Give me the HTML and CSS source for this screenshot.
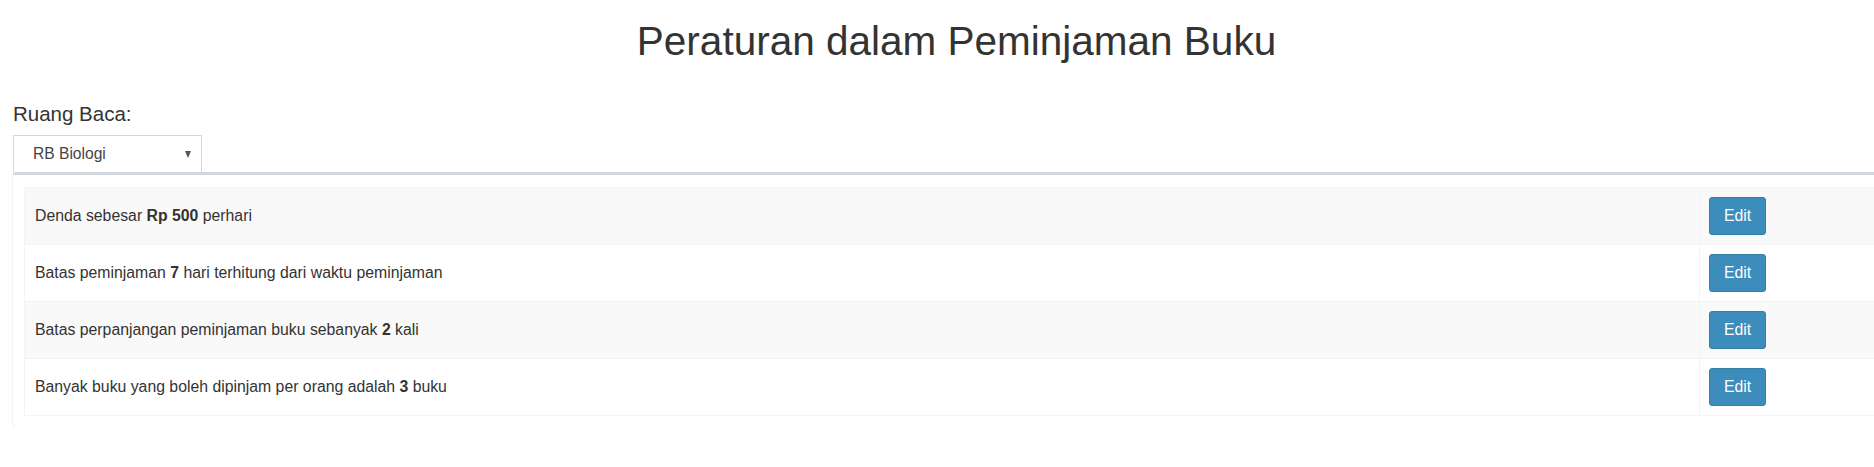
FILE: index.html
```html
<!DOCTYPE html>
<html lang="id">
<head>
<meta charset="utf-8">
<title>Peraturan dalam Peminjaman Buku</title>
<link rel="stylesheet" href="styles.css">
</head>
<body>
<div class="page">
  <h1 class="title">Peraturan dalam Peminjaman Buku</h1>
  <label class="field-label">Ruang Baca:</label>
  <div class="fake-select">
    <span class="fake-select-text">RB Biologi</span>
    <span class="fake-select-arrow"></span>
  </div>
  <div class="box">
    <table class="rules">
      <tr class="odd">
        <td class="rule">Denda sebesar <b>Rp 500</b> perhari</td>
        <td class="action"><button class="btn">Edit</button></td>
      </tr>
      <tr>
        <td class="rule">Batas peminjaman <b>7</b> hari terhitung dari waktu peminjaman</td>
        <td class="action"><button class="btn">Edit</button></td>
      </tr>
      <tr class="odd">
        <td class="rule">Batas perpanjangan peminjaman buku sebanyak <b>2</b> kali</td>
        <td class="action"><button class="btn">Edit</button></td>
      </tr>
      <tr>
        <td class="rule">Banyak buku yang boleh dipinjam per orang adalah <b>3</b> buku</td>
        <td class="action"><button class="btn">Edit</button></td>
      </tr>
    </table>
  </div>
</div>
</body>
</html>
```

FILE: styles.css
```css
html, body {
  margin: 0;
  padding: 0;
  background: #fff;
  overflow: hidden;
}
body {
  font-family: "Liberation Sans", Arial, Helvetica, sans-serif;
  color: #333;
  font-size: 15.8px;
}
.page {
  width: 1887px;
  padding-left: 13px;
  display: flex;
  flex-direction: column;
  align-items: flex-start;
}
.title {
  align-self: stretch;
  text-align: center;
  font-weight: 400;
  font-size: 40.5px;
  line-height: 44px;
  margin: 19px 0 0 0;
  color: #333;
}
.field-label {
  display: block;
  font-size: 20.5px;
  line-height: 24px;
  margin-top: 39px;
  color: #333;
}
.fake-select {
  margin-top: 9px;
  box-sizing: border-box;
  width: 189px;
  height: 37px;
  border: 1px solid #d2d6de;
  border-bottom: none;
  display: flex;
  align-items: center;
  justify-content: space-between;
  padding: 0 10px 0 19px;
  color: #444;
}
.fake-select-text {
  font-size: 15.6px;
}
.fake-select-arrow {
  width: 0;
  height: 0;
  border-left: 3.5px solid transparent;
  border-right: 3.5px solid transparent;
  border-top: 7px solid #555;
}
.box {
  align-self: stretch;
  box-sizing: border-box;
  border-top: 3px solid #d2d6de;
  border-radius: 3px;
  background: #fff;
  box-shadow: 0 1px 1px rgba(0,0,0,0.1), -1px 0 0 rgba(0,0,0,0.03);
  padding: 12px 11px 11px 11px;
}
.rules {
  width: 100%;
  border-collapse: collapse;
  border: 1px solid #f4f4f4;
}
.rules td {
  border: 1px solid #f4f4f4;
  padding: 9px 9px;
  height: 38px;
  vertical-align: middle;
  line-height: 22px;
}
.rules tr.odd td {
  background: #f9f9f9;
}
.rules td.rule {
  padding-left: 10px;
}
.rules td.action {
  width: 170px;
}
.rules b {
  font-weight: 700;
}
.btn {
  box-sizing: border-box;
  width: 57px;
  height: 38px;
  display: block;
  background: #3c8dbc;
  border: 1px solid #367fa9;
  border-radius: 3px;
  color: #fff;
  font-family: "Liberation Sans", Arial, Helvetica, sans-serif;
  font-size: 15.8px;
  padding: 0;
  cursor: pointer;
}
```
